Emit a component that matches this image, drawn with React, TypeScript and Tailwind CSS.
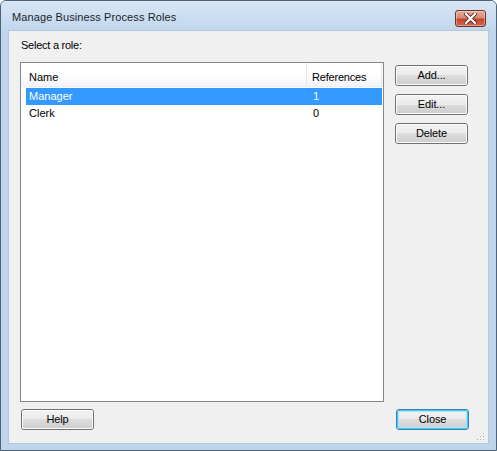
import React from "react";

const font = { fontFamily: '"Liberation Sans", Arial, sans-serif' };

function Btn({ label, focused = false }: { label: string; focused?: boolean }) {
  return (
    <div
      className={
        "relative h-[21px] w-[73px] rounded-[3px] border " +
        (focused ? "border-[#3c7fb1]" : "border-[#707070]")
      }
    >
      <div
        className={
          "absolute inset-0 rounded-[2px] flex items-center justify-center text-[11px] leading-[13px] text-black " +
          (focused
            ? "border-2 border-[#7cdaf9]/80 bg-[linear-gradient(to_bottom,#eaf6fd_0%,#d9f0fc_50%,#bee6fd_50%,#a7d9f5_100%)]"
            : "border border-[#fcfcfc] bg-[linear-gradient(to_bottom,#f2f2f2_0%,#ebebeb_50%,#dddddd_50%,#cfcfcf_100%)]")
        }
      >
        <span className="tracking-[-0.1px]">{label}</span>
      </div>
    </div>
  );
}

function FocusBtn({ label }: { label: string }) {
  return (
    <div className="relative h-[21px] w-[73px] rounded-[3px] border border-[#3c7fb1]">
      <div className="absolute inset-0 rounded-[2px] border border-[#48c8f5] shadow-[inset_0_0_0_1px_#a8e4fa] bg-[linear-gradient(to_bottom,#f2f2f2_0%,#ebebeb_50%,#dddddd_50%,#cfcfcf_100%)] flex items-center justify-center text-[11px] leading-[13px] text-black">
        <span className="tracking-[-0.1px]">{label}</span>
      </div>
    </div>
  );
}

export default function App() {
  return (
    <div className="w-[497px] h-[451px] bg-white" style={font}>
      <div className="w-[497px] h-[451px] rounded-t-[6px] border border-[#4d6378] bg-[#bfd5ec] flex flex-col overflow-hidden">
        {/* Title bar */}
        <div className="h-[29px] shrink-0 flex items-start justify-between bg-[linear-gradient(to_bottom,#d8e6f5,#c1d7ee)] pl-[11px] pr-[10px]">
          <div className="pt-[10px] text-[11px] leading-[13px] tracking-[0.1px] text-[#1e1e1e]">
            Manage Business Process Roles
          </div>
          <div className="mt-[9px] h-[17px] w-[31px] rounded-[3px] border border-[#6e3226] bg-[linear-gradient(to_bottom,#e8aa9c_0%,#d88a78_45%,#c5452c_55%,#cf6a50_100%)] shadow-[inset_0_0_0_1px_rgba(255,255,255,0.35)] flex items-center justify-center">
            <svg width="13" height="11" viewBox="0 0 13 11">
              <path
                d="M2 1 L11 10 M11 1 L2 10"
                stroke="#5a2a22"
                strokeWidth="4"
                strokeLinecap="square"
              />
              <path
                d="M2 1 L11 10 M11 1 L2 10"
                stroke="#ffffff"
                strokeWidth="2.2"
                strokeLinecap="square"
              />
            </svg>
          </div>
        </div>

        {/* Content */}
        <div className="mx-[7px] h-[414px] shrink-0 border border-[#b3c7dd] bg-[#f0f0f0] relative flex flex-col pl-[11px] pr-[19px] pt-[8px] text-[11px] text-black">
          <div className="leading-[13px] tracking-[-0.25px] pl-[1px]">Select a role:</div>
          <div className="mt-[10px] flex gap-[11px]">
            {/* List */}
            <div className="w-[364px] h-[340px] border border-[#828790] bg-white flex flex-col">
              <div className="h-[24px] flex bg-[linear-gradient(to_bottom,#ffffff_0%,#ffffff_45%,#f3f4f6_100%)] border-b border-[#eceef1]">
                <div className="w-[286px] pl-[8px] pt-[8px] leading-[13px] border-r border-[#e3e8ee]">
                  Name
                </div>
                <div className="w-[75px] pl-[5px] pt-[8px] leading-[13px] tracking-[-0.2px] border-r border-[#e3e8ee]">
                  References
                </div>
              </div>
              <div className="mt-[1px] pl-[5px] pr-[1px]">
                <div className="h-[17px] flex bg-[#3399ff] text-white leading-[17px]">
                  <div className="w-[281px] pl-[3px]">Manager</div>
                  <div className="pl-[6px]">1</div>
                </div>
                <div className="h-[17px] flex leading-[17px]">
                  <div className="w-[281px] pl-[3px]">Clerk</div>
                  <div className="pl-[6px]">0</div>
                </div>
              </div>
            </div>
            {/* Buttons */}
            <div className="mt-[3px] flex flex-col gap-[8px]">
              <Btn label="Add..." />
              <Btn label="Edit..." />
              <Btn label="Delete" />
            </div>
          </div>
          <div className="mt-[7px] flex justify-between pl-[1px]">
            <Btn label="Help" />
            <FocusBtn label="Close" />
          </div>
          {/* resize grip */}
          <svg className="absolute right-[3px] bottom-[2px]" width="8" height="8" viewBox="0 0 8 8">
            <rect x="6" y="0" width="1" height="1" fill="#b0b0b0" />
            <rect x="3" y="3" width="1" height="1" fill="#b0b0b0" />
            <rect x="6" y="3" width="1" height="1" fill="#b0b0b0" />
            <rect x="0" y="6" width="1" height="1" fill="#b0b0b0" />
            <rect x="3" y="6" width="1" height="1" fill="#b0b0b0" />
            <rect x="6" y="6" width="1" height="1" fill="#b0b0b0" />
          </svg>
        </div>
        <div className="flex-1" />
      </div>
    </div>
  );
}
